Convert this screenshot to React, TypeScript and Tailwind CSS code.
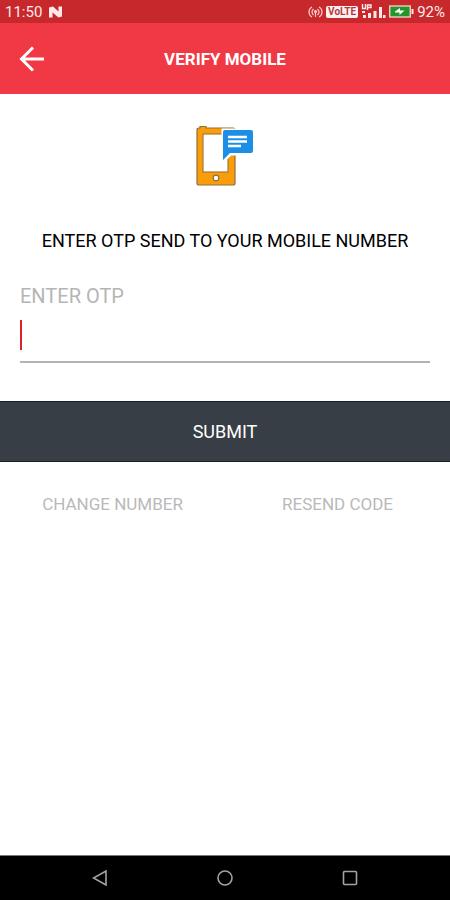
import React, { useState } from 'react';

const StatusBar: React.FC = () => (
  <div className="flex h-[23px] items-center justify-between bg-[#c6282c] px-[5px] text-[15px] leading-6 text-[#ffe9e9]">
    <div className="flex items-center gap-[6px]">
      <span>11:50</span>
      <svg width="15" height="12" viewBox="0 0 15 12" fill="#ffe9e9">
        <path d="M1 1.500L5 0.500L10.500 5.500V0.500H14V10.500L10.500 11.500L4.500 6.500V11.500H1Z" />
      </svg>
    </div>
    <div className="flex items-center gap-[3px]">
      {/* Hotspot */}
      <svg width="15" height="14" viewBox="0 0 15 14" fill="none" stroke="#ffc9ca" strokeWidth="1.2">
        <path d="M4 12C0 10 0 4 4 2M11 12C15 10 15 4 11 2M5.5 10C3.5 8 3.5 6 5.5 4M9.5 10C11.5 8 11.5 6 9.5 4" />
        <circle cx="7.5" cy="6.5" r="1" fill="#ffc9ca" />
        <path d="M7.5 7V12" />
      </svg>
      <span className="flex h-3 w-8 items-center justify-center rounded-xs bg-[#fff1f1] text-[10px] font-bold leading-3 text-[#b8373b]">
        VoLTE
      </span>
      {/* Signal strength */}
      <svg width="25" height="15" viewBox="0 0 25 15">
        <path d="M1.5 0V4.5H4.5V0M6.5 6V1H10V3.500H6.500" fill="none" stroke="#ffe9e9" strokeWidth="1.4" />
        <path d="M1 7H4V9H1ZM2 11H5V14H2ZM7 9H10V14H7ZM12.500 7H15.500V14H12.500ZM18 3H21V14H18ZM22 11H24.500V14H22Z" fill="#ffe9e9" />
      </svg>
      {/* Battery */}
      <svg width="25" height="13" viewBox="0 0 25 13">
        <rect x="0.750" y="1" width="20.500" height="11" fill="#24962d" stroke="#f5d9cb" strokeWidth="1.300" />
        <path d="M22.500 4H24.500V9H22.500Z" fill="#ffe9e9" />
        <path d="M6 6.500L11 3V5.500H15.500L10.500 10V7.500H6Z" fill="#fff" />
      </svg>
      <span>92%</span>
    </div>
  </div>
);

const PhoneMessageIcon: React.FC = () => (
  <svg width="58" height="62" viewBox="0 0 58 62">
    <path d="M4 3V1.500H10V3H37Q39 3 39 5V58Q39 60 37 60H3Q1 60 1 58V5Q1 3 3 3Z" fill="#fb9d0b" stroke="#8d713c" strokeWidth="1.200" />
    <rect x="7" y="9" width="25" height="38" fill="#fff" stroke="#a37a35" strokeWidth="1.200" />
    <circle cx="20" cy="53" r="2.800" fill="#fff" stroke="#8d713c" strokeWidth="1.200" />
    <path d="M25.500 3.500H58V30.500H35L25.500 40Z" fill="#fff" />
    <path d="M29 5H55Q57 5 57 7V26Q57 28 55 28H34L27 35V7Q27 5 29 5Z" fill="#1b8fe8" />
    <path d="M32 12H51M32 16.500H51M32 21H45" stroke="#fff" strokeWidth="2.600" />
  </svg>
);

const App: React.FC = () => {
  const [otp, setOtp] = useState('');

  return (
    <div className="flex min-h-screen flex-col bg-white font-[Roboto,sans-serif]">
      <StatusBar />
      <header className="grid h-[71px] grid-cols-[1fr_auto_1fr] items-center bg-[#f03945] px-4 text-white">
        <button type="button" aria-label="Back" className="flex size-8 items-center justify-center">
          <svg width="26" height="26" viewBox="0 0 26 26" fill="none" stroke="#fff" strokeWidth="3">
            <path d="M25 13H3M14 1.500L2.500 13L14 24.500" />
          </svg>
        </button>
        <h1 className="text-[17px] font-bold leading-6">VERIFY MOBILE</h1>
      </header>

      <main className="flex-1">
        <div className="flex justify-center pt-[31px]">
          <PhoneMessageIcon />
        </div>
        <p className="mt-[42px] text-center text-lg leading-6 text-black">
          ENTER OTP SEND TO YOUR MOBILE NUMBER
        </p>

        <form onSubmit={(e) => e.preventDefault()}>
          <div className="mx-5 mt-[31px]">
            <label htmlFor="otp" className="block text-xl leading-6 text-[#b5b5b5]">
              ENTER OTP
            </label>
            <div className="mt-3 flex h-[43px] items-start border-b-2 border-[#b3b3b3]">
              {otp === '' && <span className="h-[30px] w-[2px] bg-[#e0202c]" />}
              <input
                id="otp"
                type="text"
                inputMode="numeric"
                value={otp}
                onChange={(e) => setOtp(e.target.value)}
                className="h-[30px] min-w-0 flex-1 bg-transparent text-xl text-black caret-[#e0202c] outline-none"
              />
            </div>
          </div>
          <button type="submit" className="mt-[38px] h-[61px] w-full border-y border-[#14202b] bg-[#373e46] text-lg leading-6 text-white">
            SUBMIT
          </button>
        </form>

        <div className="mt-[30px] grid grid-cols-2 text-[17px] leading-6 text-[#b9b9b9]">
          <button type="button">CHANGE NUMBER</button>
          <button type="button">RESEND CODE</button>
        </div>
      </main>

      <nav className="grid h-[45px] grid-cols-3 items-center justify-items-center border-t border-[#777] bg-black px-[37px]">
        <button type="button" aria-label="Back">
          <svg width="16" height="16" viewBox="0 0 16 16" fill="none" stroke="#a3a3a3" strokeWidth="1.600">
            <path d="M14 1V15L1.500 8Z" />
          </svg>
        </button>
        <button type="button" aria-label="Home">
          <svg width="16" height="16" viewBox="0 0 16 16" fill="none" stroke="#a3a3a3" strokeWidth="1.600">
            <circle cx="8" cy="8" r="7" />
          </svg>
        </button>
        <button type="button" aria-label="Recent apps">
          <svg width="16" height="16" viewBox="0 0 16 16" fill="none" stroke="#a3a3a3" strokeWidth="1.600">
            <rect x="1.500" y="1.500" width="13" height="13" rx="1" />
          </svg>
        </button>
      </nav>
    </div>
  );
};

export default App;
